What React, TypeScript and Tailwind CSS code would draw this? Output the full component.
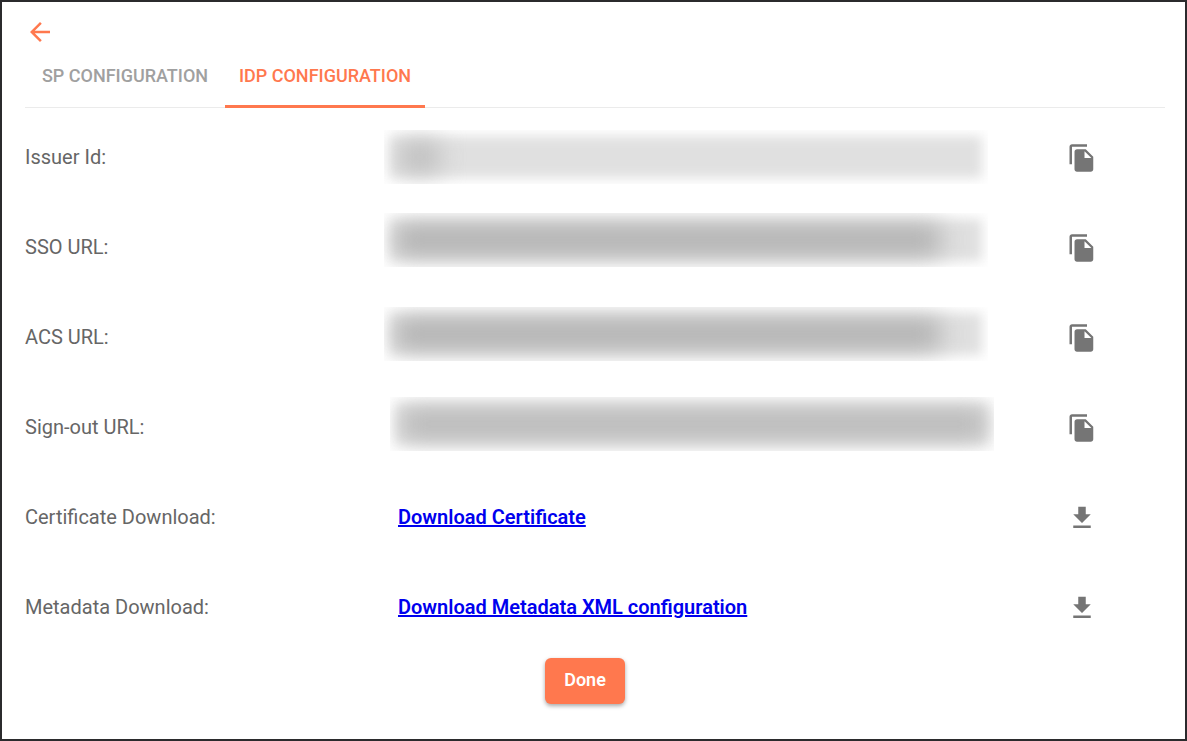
import type { ReactNode } from "react";
import { MdArrowBack, MdFileCopy, MdGetApp } from "react-icons/md";

function Redacted({ light, dark, place }: { light: string; dark: string; place: string }) {
  return (
    <div className={`w-full ${place}`} role="img" aria-label="Hidden value">
      <div className="relative h-[54px] w-full max-w-[604px] overflow-hidden">
        <div className={`absolute inset-x-1.5 inset-y-1.5 blur-[6px] ${light}`} />
        <div className={`absolute inset-y-3 blur-[12px] ${dark}`} />
      </div>
    </div>
  );
}

function Row({ label, action, icon, children }: { label: string; action: string; icon: ReactNode; children: ReactNode }) {
  return (
    <div className="grid h-[90px] grid-cols-[359fr_683fr_98fr] items-center">
      <dt className="text-xl text-[#666666]">{label}</dt>
      <dd className="flex items-center">{children}</dd>
      <dd className="flex pt-0.5">
        <button type="button" aria-label={action} className="cursor-pointer text-[#757575]">
          {icon}
        </button>
      </dd>
    </div>
  );
}

const link = "ml-[14px] text-xl font-semibold text-[#0000ee] underline";

export default function App() {
  return (
    <main className="flex min-h-screen flex-col border-2 border-[#2b2b2d] bg-white pr-5 pl-[23px] font-['Roboto',sans-serif]">
      <div className="flex h-14 items-center">
        <button type="button" aria-label="Back" className="mt-1 cursor-pointer text-[#ff784e]">
          <MdArrowBack size={30} />
        </button>
      </div>
      <div role="tablist" className="flex h-[50px] border-b border-[#ebebeb] text-lg font-medium">
        <button type="button" role="tab" aria-selected="false" className="h-[50px] w-[200px] cursor-pointer pb-[14px] text-[#a0a0a0]">
          SP CONFIGURATION
        </button>
        <button
          type="button"
          role="tab"
          aria-selected="true"
          className="h-[50px] w-[200px] cursor-pointer border-b-3 border-[#ff784e] pb-[11px] text-[#ff784e]"
        >
          IDP CONFIGURATION
        </button>
      </div>
      <dl className="mt-1">
        <Row label="Issuer Id:" action="Copy issuer id" icon={<MdFileCopy size={30} />}>
          <Redacted light="bg-[#e0e0e0]" dark="left-4 w-10 bg-[#bebebe]" place="" />
        </Row>
        <Row label="SSO URL:" action="Copy SSO URL" icon={<MdFileCopy size={30} />}>
          <Redacted light="bg-[#dfdfdf]" dark="left-3 right-12 bg-[#b0b0b0]" place="pb-[14px]" />
        </Row>
        <Row label="ACS URL:" action="Copy ACS URL" icon={<MdFileCopy size={30} />}>
          <Redacted light="bg-[#dfdfdf]" dark="left-3 right-12 bg-[#b0b0b0]" place="pb-[6px]" />
        </Row>
        <Row label="Sign-out URL:" action="Copy sign-out URL" icon={<MdFileCopy size={30} />}>
          <Redacted light="bg-[#dfdfdf]" dark="left-3 right-2 bg-[#b8b8b8]" place="pb-[6px] pl-[6px]" />
        </Row>
        <Row label="Certificate Download:" action="Download certificate file" icon={<MdGetApp size={30} />}>
          <a href="#certificate" className={link}>Download Certificate</a>
        </Row>
        <Row label="Metadata Download:" action="Download metadata file" icon={<MdGetApp size={30} />}>
          <a href="#metadata" className={link}>Download Metadata XML configuration</a>
        </Row>
      </dl>
      <div className="flex justify-center pt-1.5 pr-5 pb-8">
        <button
          type="button"
          className="h-[46px] w-20 cursor-pointer rounded-md bg-[#ff784e] pb-0.5 text-lg font-semibold text-white shadow-[0_2px_4px_rgba(0,0,0,0.35)]"
        >
          Done
        </button>
      </div>
    </main>
  );
}
